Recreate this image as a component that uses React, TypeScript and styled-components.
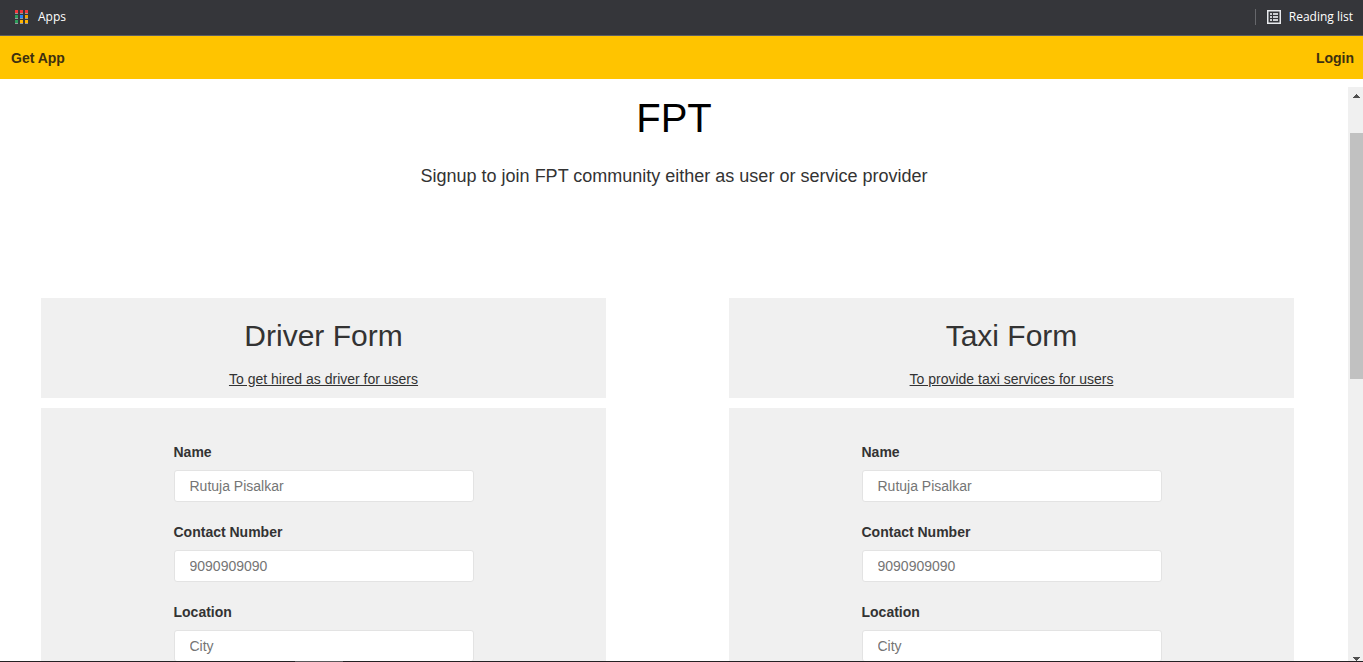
import React from "react";
import styled, { createGlobalStyle } from "styled-components";

const GlobalStyle = createGlobalStyle`
  *, *::before, *::after { box-sizing: border-box; }
  body {
    margin: 0;
    background: #ffffff;
    color: #333333;
    font-family: "Liberation Sans", Arial, sans-serif;
    font-size: 14px;
    line-height: 20px;
  }
`;

const Screen = styled.div`
  display: flex;
  flex-direction: column;
  height: 100vh;
  overflow: hidden;
`;

const BookmarksBar = styled.header`
  display: flex;
  flex: none;
  align-items: center;
  justify-content: space-between;
  height: 36px;
  padding: 0 10px 1px 15px;
  background: #35363a;
  border-bottom: 1px solid #5d5e61;
`;

const BookmarkButton = styled.button<{ $gap: number }>`
  display: flex;
  align-items: center;
  gap: ${(p) => p.$gap}px;
  padding: 0;
  border: 0;
  background: none;
  color: #ffffff;
  font: 12px/16px "Open Sans", "Noto Sans", sans-serif;
`;

const ReadingGroup = styled.div`
  display: flex;
  align-items: center;
  gap: 11px;
`;

const Divider = styled.span`
  width: 1px;
  height: 16px;
  background: #66676b;
`;

const NavBar = styled.nav`
  display: flex;
  flex: none;
  align-items: center;
  justify-content: space-between;
  height: 43px;
  padding: 0 9px 0 11px;
  background: #ffc400;
`;

const NavLink = styled.a`
  color: #3d3010;
  font-weight: bold;
  text-decoration: none;
`;

const Viewport = styled.div`
  display: flex;
  flex: 1;
  min-height: 0;
  margin-top: 8px;
`;

const Content = styled.main`
  display: flex;
  flex: 1;
  flex-direction: column;
  overflow: hidden;
`;

const Hero = styled.section`
  flex: none;
  padding: 7px 0 108px;
  text-align: center;
`;

const Title = styled.h1`
  margin: 0 0 20px;
  color: #000000;
  font-size: 40px;
  font-weight: normal;
  line-height: 48px;
`;

const Subtitle = styled.p`
  margin: 0;
  font-size: 18px;
  line-height: 28px;
`;

const FormColumns = styled.div`
  display: grid;
  flex: none;
  grid-template-columns: 1fr 1fr;
  column-gap: 123px;
  padding: 0 54px 0 41px;
`;

const FormColumn = styled.section`
  display: flex;
  flex-direction: column;
  gap: 10px;
`;

const FormHeader = styled.header`
  height: 100px;
  padding-top: 20px;
  background: #f0f0f0;
  text-align: center;
`;

const FormTitle = styled.h2`
  margin: 0 0 15px;
  font-size: 30px;
  font-weight: normal;
  line-height: 36px;
`;

const FormNote = styled.p`
  margin: 0;
  text-decoration: underline;
`;

const FormBody = styled.form`
  display: flex;
  flex-direction: column;
  align-items: center;
  gap: 20px;
  padding: 34px 0;
  background: #f0f0f0;
`;

const Field = styled.div`
  display: flex;
  flex-direction: column;
  gap: 8px;
  width: 300px;
`;

const Label = styled.label`
  font-weight: bold;
`;

const TextInput = styled.input`
  width: 100%;
  height: 32px;
  padding: 0 15px;
  border: 1px solid #e3e3e3;
  border-radius: 3px;
  background: #ffffff;
  font: 14px/20px "Liberation Sans", Arial, sans-serif;
  &::placeholder { color: #757575; opacity: 1; }
`;

const ScrollTrack = styled.div`
  display: grid;
  flex: none;
  grid-template-rows: 17px 29fr 246fr 265fr 17px;
  width: 15px;
  padding-left: 2px;
  background: #f0f0f0;
`;

const ScrollThumb = styled.div`
  grid-row: 3;
  background: #c1c1c1;
`;

const ScrollArrow = styled.svg<{ $end?: boolean }>`
  grid-row: ${(p) => (p.$end ? 5 : 1)};
  align-self: ${(p) => (p.$end ? "end" : "center")};
  justify-self: center;
`;

const TaskbarEdge = styled.footer`
  display: grid;
  flex: none;
  grid-template-columns: 295fr 48fr 1020fr;
  height: 1px;
  background: #242124;
`;

const TaskbarHighlight = styled.span`
  grid-column: 2;
  background: #5b585b;
`;

const appColors = [
  ["#f0373a", "#f0373a", "#f0373a"],
  ["#2e9e5b", "#2684fc", "#f5a300"],
  ["#2e9e5b", "#ffb300", "#ffb300"],
];

const AppsIcon = () => (
  <svg width="13" height="14" viewBox="0 0 13 14" shapeRendering="crispEdges" aria-hidden="true">
    {appColors.map((row, y) =>
      row.map((color, x) => (
        <g key={`${x}-${y}`}>
          <rect x={x * 5} y={y * 5} width="3" height="3" fill={color} />
          <rect x={x * 5} y={y * 5 + 3} width="3" height="1" fill="#96979a" />
        </g>
      ))
    )}
  </svg>
);

const ListIcon = () => (
  <svg width="14" height="14" viewBox="0 0 14 14" fill="none" stroke="#e8eaed" aria-hidden="true">
    <path d="M.75 .75h12.5v12.5H.75z" strokeWidth="1.5" />
    <path d="M3 4h2M6 4h5M3 7h2M6 7h5M3 10h2M6 10h5" strokeWidth="2" strokeOpacity=".85" />
  </svg>
);

const fields = [
  { id: "name", label: "Name", placeholder: "Rutuja Pisalkar" },
  { id: "contact", label: "Contact Number", placeholder: "9090909090" },
  { id: "location", label: "Location", placeholder: "City" },
];

const forms = [
  { id: "driver", title: "Driver Form", note: "To get hired as driver for users" },
  { id: "taxi", title: "Taxi Form", note: "To provide taxi services for users" },
];

export default function App() {
  return (
    <Screen>
      <GlobalStyle />
      <BookmarksBar>
        <BookmarkButton type="button" $gap={10}>
          <AppsIcon />
          Apps
        </BookmarkButton>
        <ReadingGroup>
          <Divider />
          <BookmarkButton type="button" $gap={8}>
            <ListIcon />
            Reading list
          </BookmarkButton>
        </ReadingGroup>
      </BookmarksBar>
      <NavBar>
        <NavLink href="#app">Get App</NavLink>
        <NavLink href="#login">Login</NavLink>
      </NavBar>
      <Viewport>
        <Content>
          <Hero>
            <Title>FPT</Title>
            <Subtitle>Signup to join FPT community either as user or service provider</Subtitle>
          </Hero>
          <FormColumns>
            {forms.map((form) => (
              <FormColumn key={form.id}>
                <FormHeader>
                  <FormTitle>{form.title}</FormTitle>
                  <FormNote>{form.note}</FormNote>
                </FormHeader>
                <FormBody>
                  {fields.map((field) => (
                    <Field key={field.id}>
                      <Label htmlFor={`${form.id}-${field.id}`}>{field.label}</Label>
                      <TextInput id={`${form.id}-${field.id}`} placeholder={field.placeholder} />
                    </Field>
                  ))}
                </FormBody>
              </FormColumn>
            ))}
          </FormColumns>
        </Content>
        <ScrollTrack aria-hidden="true">
          <ScrollArrow width="7" height="4" viewBox="0 0 7 4" shapeRendering="crispEdges">
            <path d="M3 0h1v1h1v1h1v1h1v1H0V3h1V2h1V1h1z" fill="#505050" />
          </ScrollArrow>
          <ScrollThumb />
          <ScrollArrow $end width="7" height="4" viewBox="0 0 7 4" shapeRendering="crispEdges">
            <path d="M0 0h7v1H6v1H5v1H4v1H3V3H2V2H1V1H0z" fill="#505050" />
          </ScrollArrow>
        </ScrollTrack>
      </Viewport>
      <TaskbarEdge>
        <TaskbarHighlight />
      </TaskbarEdge>
    </Screen>
  );
}
